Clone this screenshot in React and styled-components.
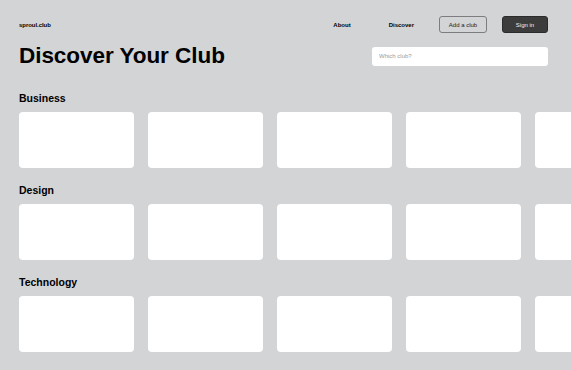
import React from 'react';
import styled, { createGlobalStyle } from 'styled-components';

const GlobalStyle = createGlobalStyle`
  html, body {
    margin: 0;
    padding: 0;
    background: #d3d4d6;
    overflow: hidden;
  }
  body {
    font-family: "Liberation Sans", Arial, sans-serif;
    color: #000;
  }
`;

const categories = ['Business', 'Design', 'Technology'];

const App = () => {
  return (
    <Page>
      <GlobalStyle />
      <Header>
        <Logo>sproul.club</Logo>
        <Nav>
          <NavLink space={23}>About</NavLink>
          <NavLink space={10}>Discover</NavLink>
          <OutlineButton>Add a club</OutlineButton>
          <DarkButton>Sign in</DarkButton>
        </Nav>
      </Header>
      <TitleRow>
        <Title>Discover Your Club</Title>
        <Search placeholder="Which club?" />
      </TitleRow>
      <Sections>
        {categories.map((name) => (
          <Section key={name}>
            <SectionTitle>{name}</SectionTitle>
            <CardRow>
              {[0, 1, 2, 3, 4].map((i) => (
                <Card key={i} />
              ))}
            </CardRow>
          </Section>
        ))}
      </Sections>
    </Page>
  );
};

export default App;

const Page = styled.div`
  width: 571px;
  height: 370px;
  box-sizing: border-box;
  padding: 16px 23px 0 19px;
  overflow: hidden;
`;

const Header = styled.header`
  display: flex;
  align-items: center;
  justify-content: space-between;
  height: 17px;
`;

const Logo = styled.div`
  font-size: 6px;
  font-weight: 700;
  letter-spacing: -0.05px;
  margin-top: 1px;
`;

const Nav = styled.nav`
  display: flex;
  align-items: center;
  gap: 15px;
`;

const NavLink = styled.span`
  font-size: 6px;
  font-weight: 700;
  color: #000;
  margin-right: ${({ space }) => space}px;
  cursor: pointer;
`;

const OutlineButton = styled.button`
  width: 48px;
  height: 17px;
  padding: 0;
  border: 1px solid #7d7d7f;
  border-radius: 3px;
  background: transparent;
  font-family: inherit;
  font-size: 6px;
  color: #1a1a1a;
`;

const DarkButton = styled.button`
  width: 46px;
  height: 17px;
  padding: 0;
  border: 1px solid #2b2b2b;
  border-radius: 3px;
  background: #3c3c3d;
  font-family: inherit;
  font-size: 6px;
  color: #f2f2f2;
`;

const TitleRow = styled.div`
  display: flex;
  align-items: center;
  justify-content: space-between;
  margin-top: 12px;
`;

const Title = styled.h1`
  margin: 0;
  font-size: 22.5px;
  line-height: 1;
  font-weight: 700;
  letter-spacing: -0.05px;
`;

const Search = styled.input`
  width: 176px;
  height: 19px;
  box-sizing: border-box;
  border: none;
  border-radius: 3px;
  background: #fff;
  padding: 0 7px;
  font-family: inherit;
  font-size: 6px;
  color: #333;
  outline: none;

  &::placeholder {
    color: #9a9a9c;
  }
`;

const Sections = styled.main`
  display: flex;
  flex-direction: column;
  gap: 16px;
  margin-top: 24px;
`;

const Section = styled.section`
  display: flex;
  flex-direction: column;
  gap: 8px;
`;

const SectionTitle = styled.h2`
  margin: 0;
  font-size: 10.5px;
  line-height: 12px;
  font-weight: 700;
`;

const CardRow = styled.div`
  display: flex;
  gap: 14px;
`;

const Card = styled.div`
  flex-shrink: 0;
  width: 115px;
  height: 56px;
  border-radius: 4px;
  background: #fff;
`;
